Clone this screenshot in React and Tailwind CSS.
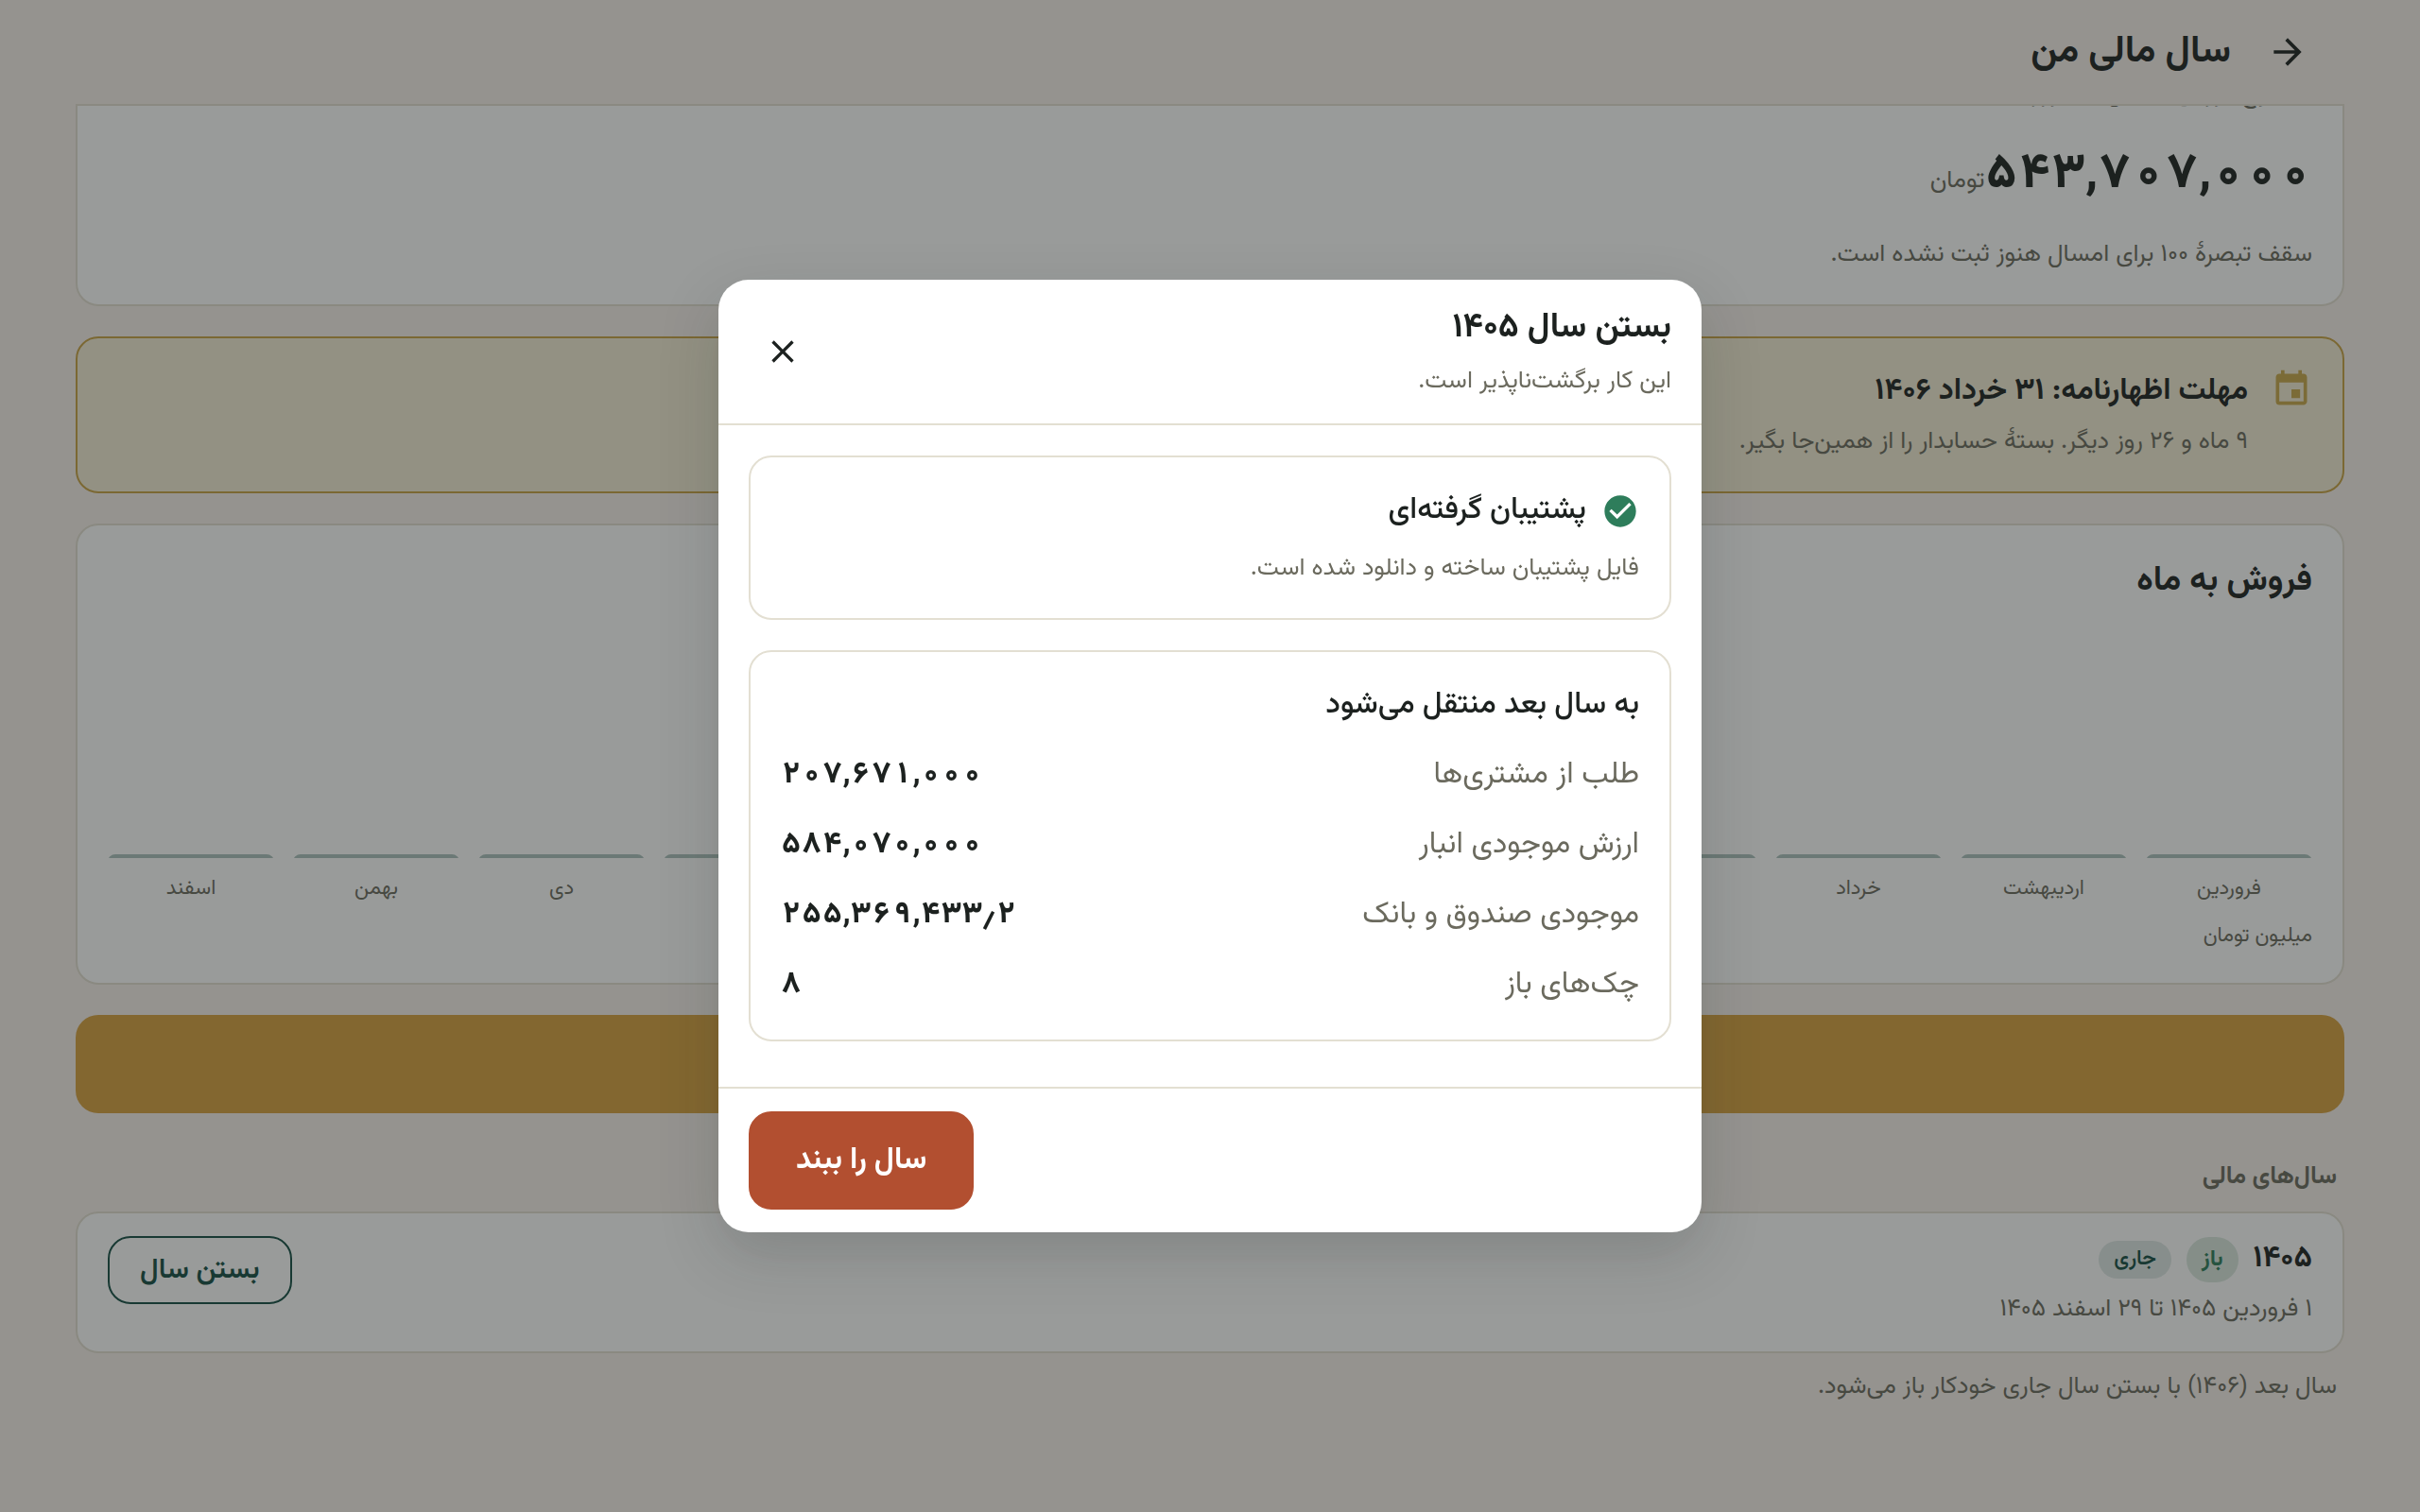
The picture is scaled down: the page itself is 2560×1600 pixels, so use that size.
import { MdArrowForward, MdCheckCircle, MdClose, MdEvent } from "react-icons/md";

const months = [
  "فروردین",
  "اردیبهشت",
  "خرداد",
  "تیر",
  "مرداد",
  "شهریور",
  "مهر",
  "آبان",
  "آذر",
  "دی",
  "بهمن",
  "اسفند",
];

const carried = [
  ["طلب از مشتری‌ها", "۲۰۷,۶۷۱,۰۰۰"],
  ["ارزش موجودی انبار", "۵۸۴,۰۷۰,۰۰۰"],
  ["موجودی صندوق و بانک", "۲۵۵,۳۶۹,۴۳۳٫۲"],
  ["چک‌های باز", "۸"],
];

function Header() {
  return (
    <header className="mx-20 flex h-28 items-center gap-4 border-b-2 border-[#e3dfd2] px-4">
      <button type="button" aria-label="بازگشت" className="flex size-22 items-center justify-center text-[44px]">
        <MdArrowForward />
      </button>
      <h1 className="text-[40px] leading-[62px] font-bold">سال مالی من</h1>
    </header>
  );
}

function SalesSummary() {
  return (
    <div className="flex h-[212px] flex-col justify-end overflow-hidden">
      <section className="rounded-3xl border-2 border-[#e3dfd2] bg-white p-8">
        <p className="text-[26px] leading-10 text-[#6b6a5e]">مجموع فروش امسال تا امروز</p>
        <p className="mt-[25px] flex items-baseline">
          <span dir="ltr" className="text-[52px] leading-[81px] font-extrabold tabular-nums">
            ۵۴۳,۷۰۷,۰۰۰
          </span>
          <span className="text-[26px] leading-10 text-[#6b6a5e]">تومان</span>
        </p>
        <p className="mt-6 text-[26px] leading-10 text-[#6b6a5e]">سقف تبصرهٔ ۱۰۰ برای امسال هنوز ثبت نشده است.</p>
      </section>
    </div>
  );
}

function Deadline() {
  return (
    <section className="flex items-start gap-6 rounded-3xl border-2 border-[#c9a244] bg-[#f4edd5] p-8">
      <MdEvent className="size-11 shrink-0 text-[#c9a84c]" />
      <div>
        <h2 className="pb-0.5 text-[32px] leading-12 font-bold">مهلت اظهارنامه: ۳۱ خرداد ۱۴۰۶</h2>
        <p className="mt-2 text-[26px] leading-10 text-[#6b6a5e]">۹ ماه و ۲۶ روز دیگر. بستهٔ حسابدار را از همین‌جا بگیر.</p>
      </div>
    </section>
  );
}

function SalesChart() {
  return (
    <section className="rounded-3xl border-2 border-[#e3dfd2] bg-white p-8">
      <h2 className="pb-0.5 text-4xl leading-[54px] font-bold">فروش به ماه</h2>
      <div className="mt-4 grid h-[298px] grid-cols-12 items-end gap-5">
        {months.map((month) => (
          <div key={month} className="text-center">
            <div className="h-1 overflow-hidden">
              <div className="h-6 rounded-t-lg bg-[#acc1bd]" />
            </div>
            <p className="mt-4 text-[22px] leading-[34px] text-[#6b6a5e]">{month}</p>
          </div>
        ))}
      </div>
      <p className="mt-4 text-[22px] leading-[34px] text-[#6b6a5e]">میلیون تومان</p>
    </section>
  );
}

function YearCard() {
  return (
    <section className="mt-4 flex items-start justify-between rounded-3xl border-2 border-[#e3dfd2] bg-white px-8 py-6">
      <div>
        <div className="flex h-[50px] items-center gap-4">
          <h3 className="pb-0.5 text-[32px] leading-12 font-bold">۱۴۰۵</h3>
          <span className="rounded-full bg-[#dae8df] px-4 py-1 text-2xl leading-10 font-bold text-[#2e7d5b]">باز</span>
          <span className="rounded-full bg-[#dfe8e5] px-4 text-[22px] leading-10 font-semibold text-[#144e44]">جاری</span>
        </div>
        <p className="mt-2 text-[26px] leading-10 text-[#6b6a5e]">۱ فروردین ۱۴۰۵ تا ۲۹ اسفند ۱۴۰۵</p>
      </div>
      <button type="button" className="h-18 rounded-3xl border-2 border-[#144e44] px-8 text-[30px] font-semibold text-[#144e44]">
        بستن سال
      </button>
    </section>
  );
}

function CloseYearDialog() {
  return (
    <div className="fixed inset-0 flex items-center justify-center bg-[#1c211f]/45 p-8">
      <div
        role="dialog"
        aria-modal="true"
        aria-labelledby="dialog-title"
        className="w-full max-w-[1040px] rounded-4xl bg-white shadow-[0_24px_64px_rgba(28,33,31,0.18)]"
      >
        <div className="flex items-center justify-between border-b-2 border-[#e3dfd2] px-8 py-6">
          <div>
            <h2 id="dialog-title" className="pb-0.5 text-4xl leading-[54px] font-bold">بستن سال ۱۴۰۵</h2>
            <p className="mt-2 text-[26px] leading-10 text-[#6b6a5e]">این کار برگشت‌ناپذیر است.</p>
          </div>
          <button type="button" aria-label="بستن" className="flex size-18 items-center justify-center text-[40px]">
            <MdClose />
          </button>
        </div>
        <div className="flex flex-col gap-8 px-8 pt-8 pb-12">
          <section className="rounded-3xl border-2 border-[#e3dfd2] p-8">
            <div className="flex items-center gap-4">
              <MdCheckCircle className="size-10 text-[#2e7d5b]" />
              <h3 className="pb-0.5 text-[32px] leading-12 font-medium">پشتیبان گرفته‌ای</h3>
            </div>
            <p className="mt-4 text-[26px] leading-10 text-[#6b6a5e]">فایل پشتیبان ساخته و دانلود شده است.</p>
          </section>
          <section className="flex flex-col gap-6 rounded-3xl border-2 border-[#e3dfd2] p-8">
            <h3 className="pb-0.5 text-[32px] leading-12 font-medium">به سال بعد منتقل می‌شود</h3>
            <dl className="flex flex-col gap-6 text-[32px] leading-12">
              {carried.map(([label, value]) => (
                <div key={label} className="flex justify-between pb-0.5">
                  <dt className="text-[#6b6a5e]">{label}</dt>
                  <dd dir="ltr" className="font-extrabold tabular-nums">{value}</dd>
                </div>
              ))}
            </dl>
          </section>
        </div>
        <div className="flex justify-end border-t-2 border-[#e3dfd2] px-8 py-6">
          <button type="button" className="h-26 rounded-3xl border-2 border-[#b24f30] bg-[#b24f30] px-12 text-[32px] font-bold text-white">
            سال را ببند
          </button>
        </div>
      </div>
    </div>
  );
}

export default function App() {
  return (
    <div dir="rtl" className="h-screen overflow-hidden bg-[#f8f1ec] font-[Vazirmatn,'Noto_Sans_Arabic',sans-serif] text-[#1c211f]">
      <Header />
      <main className="flex flex-col gap-8 px-20">
        <SalesSummary />
        <Deadline />
        <SalesChart />
        <button type="button" aria-label="بستهٔ حسابدار" className="h-26 rounded-3xl bg-[#d7a13f]" />
        <div className="mt-4">
          <h2 className="px-2 text-[26px] leading-10 font-bold text-[#6b6a5e]">سال‌های مالی</h2>
          <YearCard />
          <p className="mt-4 px-2 text-[26px] leading-10 text-[#6b6a5e]">سال بعد (۱۴۰۶) با بستن سال جاری خودکار باز می‌شود.</p>
        </div>
      </main>
      <CloseYearDialog />
    </div>
  );
}
